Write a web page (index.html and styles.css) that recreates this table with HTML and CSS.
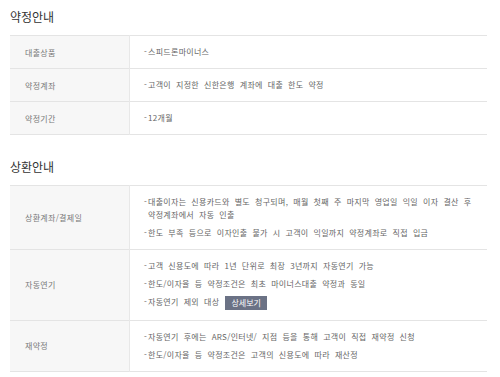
FILE: index.html
```html
<!DOCTYPE html>
<html lang="ko">
<head>
    <meta charset="UTF-8">
    <meta name="viewport" content="width=device-width, initial-scale=1.0">
    <title>약정 및 상환 안내</title>
    <link rel="stylesheet" href="styles.css">
</head>
<body>
    <div class="wrap">
        <!-- 약정안내 -->
        <div class="section">
            <h2 class="sec-title">약정안내</h2>
            <table class="info-table">
                <tr>
                    <th>대출상품</th>
                    <td>
                        <ul class="dash-list">
                            <li>스피드론마이너스</li>
                        </ul>
                    </td>
                </tr>
                <tr>
                    <th>약정계좌</th>
                    <td>
                        <ul class="dash-list">
                            <li>고객이 지정한 신한은행 계좌에 대출 한도 약정</li>
                        </ul>
                    </td>
                </tr>
                <tr>
                    <th>약정기간</th>
                    <td>
                        <ul class="dash-list">
                            <li>12개월</li>
                        </ul>
                    </td>
                </tr>
            </table>
        </div>

        <!-- 상환안내 -->
        <div class="section">
            <h2 class="sec-title">상환안내</h2>
            <table class="info-table">
                <tr>
                    <th>상환계좌/결제일</th>
                    <td>
                        <ul class="dash-list">
                            <li>대출이자는 신용카드와 별도 청구되며, 매월 첫째 주 마지막 영업일 익일 이자 결산 후 약정계좌에서 자동 인출</li>
                            <li>한도 부족 등으로 이자인출 불가 시 고객이 익일까지 약정계좌로 직접 입금</li>
                        </ul>
                    </td>
                </tr>
                <tr>
                    <th>자동연기</th>
                    <td>
                        <ul class="dash-list">
                            <li>고객 신용도에 따라 1년 단위로 최장 3년까지 자동연기 가능</li>
                            <li>한도/이자율 등 약정조건은 최초 마이너스대출 약정과 동일</li>
                            <li>자동연기 제외 대상 <a href="#" class="btn-detail">상세보기</a></li>
                        </ul>
                    </td>
                </tr>
                <tr>
                    <th>재약정</th>
                    <td>
                        <ul class="dash-list">
                            <li>자동연기 후에는 ARS/인터넷/ 지점 등을 통해 고객이 직접 재약정 신청</li>
                            <li>한도/이자율 등 약정조건은 고객의 신용도에 따라 재산정</li>
                        </ul>
                    </td>
                </tr>
            </table>
        </div>
    </div>
</body>
</html>
```

FILE: styles.css
```css
body {
    margin: 0;
    background: #fff;
    font-family: "Noto Sans CJK KR", "Noto Sans", sans-serif;
    color: #666;
}

.wrap {
    padding: 7px 13px 0 10px;
}

.section + .section {
    margin-top: 22px;
}

.sec-title {
    margin: 0 0 8px;
    font-size: 12px;
    font-weight: normal;
    line-height: 20px;
    color: #333;
}

.info-table {
    width: 477px;
    border-collapse: collapse;
    border-top: 1px solid #e4e4e4;
}

.info-table tr {
    border-bottom: 1px solid #e4e4e4;
}

.info-table th {
    width: 104px;
    padding: 0 0 0 15px;
    background: #f7f7f7;
    border-right: 1px solid #e8e8e8;
    font-size: 8px;
    font-weight: normal;
    line-height: 13px;
    letter-spacing: 0.3px;
    text-align: left;
    vertical-align: middle;
    color: #777;
}

.info-table td {
    padding: 9px 8px 10px 14px;
    font-size: 8px;
    line-height: 13px;
    letter-spacing: 0.3px;
    word-spacing: 2.5px;
    word-break: keep-all;
    vertical-align: middle;
}

.dash-list {
    margin: 0;
    padding: 0;
    list-style: none;
}

.dash-list li {
    padding-left: 4px;
    text-indent: -4px;
}

.dash-list li + li {
    margin-top: 5px;
}

.dash-list li::before {
    content: "-";
    display: inline-block;
    width: 4px;
    text-indent: 0;
}

.btn-detail {
    display: inline-block;
    margin-left: 1px;
    padding: 0 6px;
    height: 14px;
    line-height: 14px;
    background: #6b7285;
    color: #fff;
    text-decoration: none;
    text-indent: 0;
    letter-spacing: 0;
    word-spacing: 0;
    vertical-align: middle;
}
```
